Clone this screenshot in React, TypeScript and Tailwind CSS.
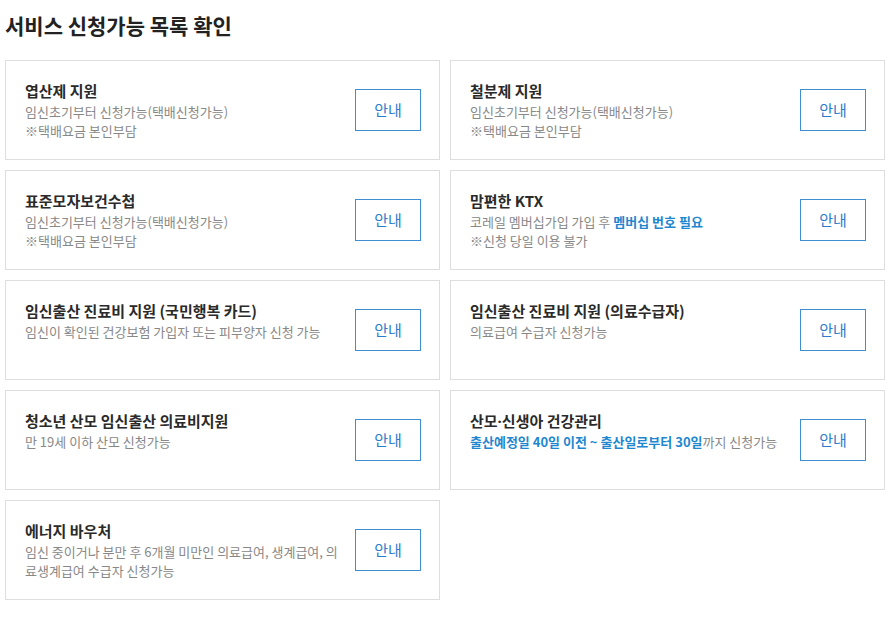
import React from "react";

type Item = { title: React.ReactNode; desc: React.ReactNode };

const B = ({ children }: { children: React.ReactNode }) => (
  <span className="font-bold text-[#1f87d0]">{children}</span>
);

const items: Item[] = [
  { title: "엽산제 지원", desc: <>임신초기부터 신청가능(택배신청가능)<br />※택배요금 본인부담</> },
  { title: "철분제 지원", desc: <>임신초기부터 신청가능(택배신청가능)<br />※택배요금 본인부담</> },
  { title: "표준모자보건수첩", desc: <>임신초기부터 신청가능(택배신청가능)<br />※택배요금 본인부담</> },
  { title: "맘편한 KTX", desc: <>코레일 멤버십가입 가입 후 <B>멤버십 번호 필요</B><br />※신청 당일 이용 불가</> },
  { title: "임신출산 진료비 지원 (국민행복 카드)", desc: <>임신이 확인된 건강보험 가입자 또는 피부양자 신청 가능</> },
  { title: "임신출산 진료비 지원 (의료수급자)", desc: <>의료급여 수급자 신청가능</> },
  { title: "청소년 산모 임신출산 의료비지원", desc: <>만 19세 이하 산모 신청가능</> },
  {
    title: <>산모<span style={{ fontFamily: '"Noto Sans", sans-serif' }}>·</span>신생아 건강관리</>,
    desc: <><B>출산예정일 40일 이전 ~ 출산일로부터 30일</B>까지 신청가능</>,
  },
  { title: "에너지 바우처", desc: <>임신 중이거나 분만 후 6개월 미만인 의료급여, 생계급여, 의료생계급여 수급자 신청가능</> },
];

export default function App() {
  return (
    <div
      className="w-[889px] min-h-[639px] bg-white pl-[5px] pr-[4px] pt-[11px]"
      style={{ fontFamily: '"Noto Sans CJK KR", "Noto Sans", sans-serif' }}
    >
      <h1 className="text-[21px] leading-[28px] font-bold text-[#222]">
        서비스 신청가능 목록 확인
      </h1>
      <div className="mt-[21px] grid grid-cols-2 gap-[10px]">
        {items.map((it, i) => (
          <div
            key={i}
            className="min-h-[100px] border border-[#dedede] py-[19px] pl-[19px] pr-[18px] flex items-center gap-[10px]"
          >
            <div className="flex-1 self-start">
              <div className="text-[15px] leading-[22px] font-bold text-[#2a2a2a]">{it.title}</div>
              <div className="text-[13px] leading-[19px] text-[#888]">{it.desc}</div>
            </div>
            <button className="w-[66px] h-[42px] shrink-0 border border-[#3f8fd0] text-[15px] text-[#2a7ccc] bg-white">
              안내
            </button>
          </div>
        ))}
      </div>
    </div>
  );
}
